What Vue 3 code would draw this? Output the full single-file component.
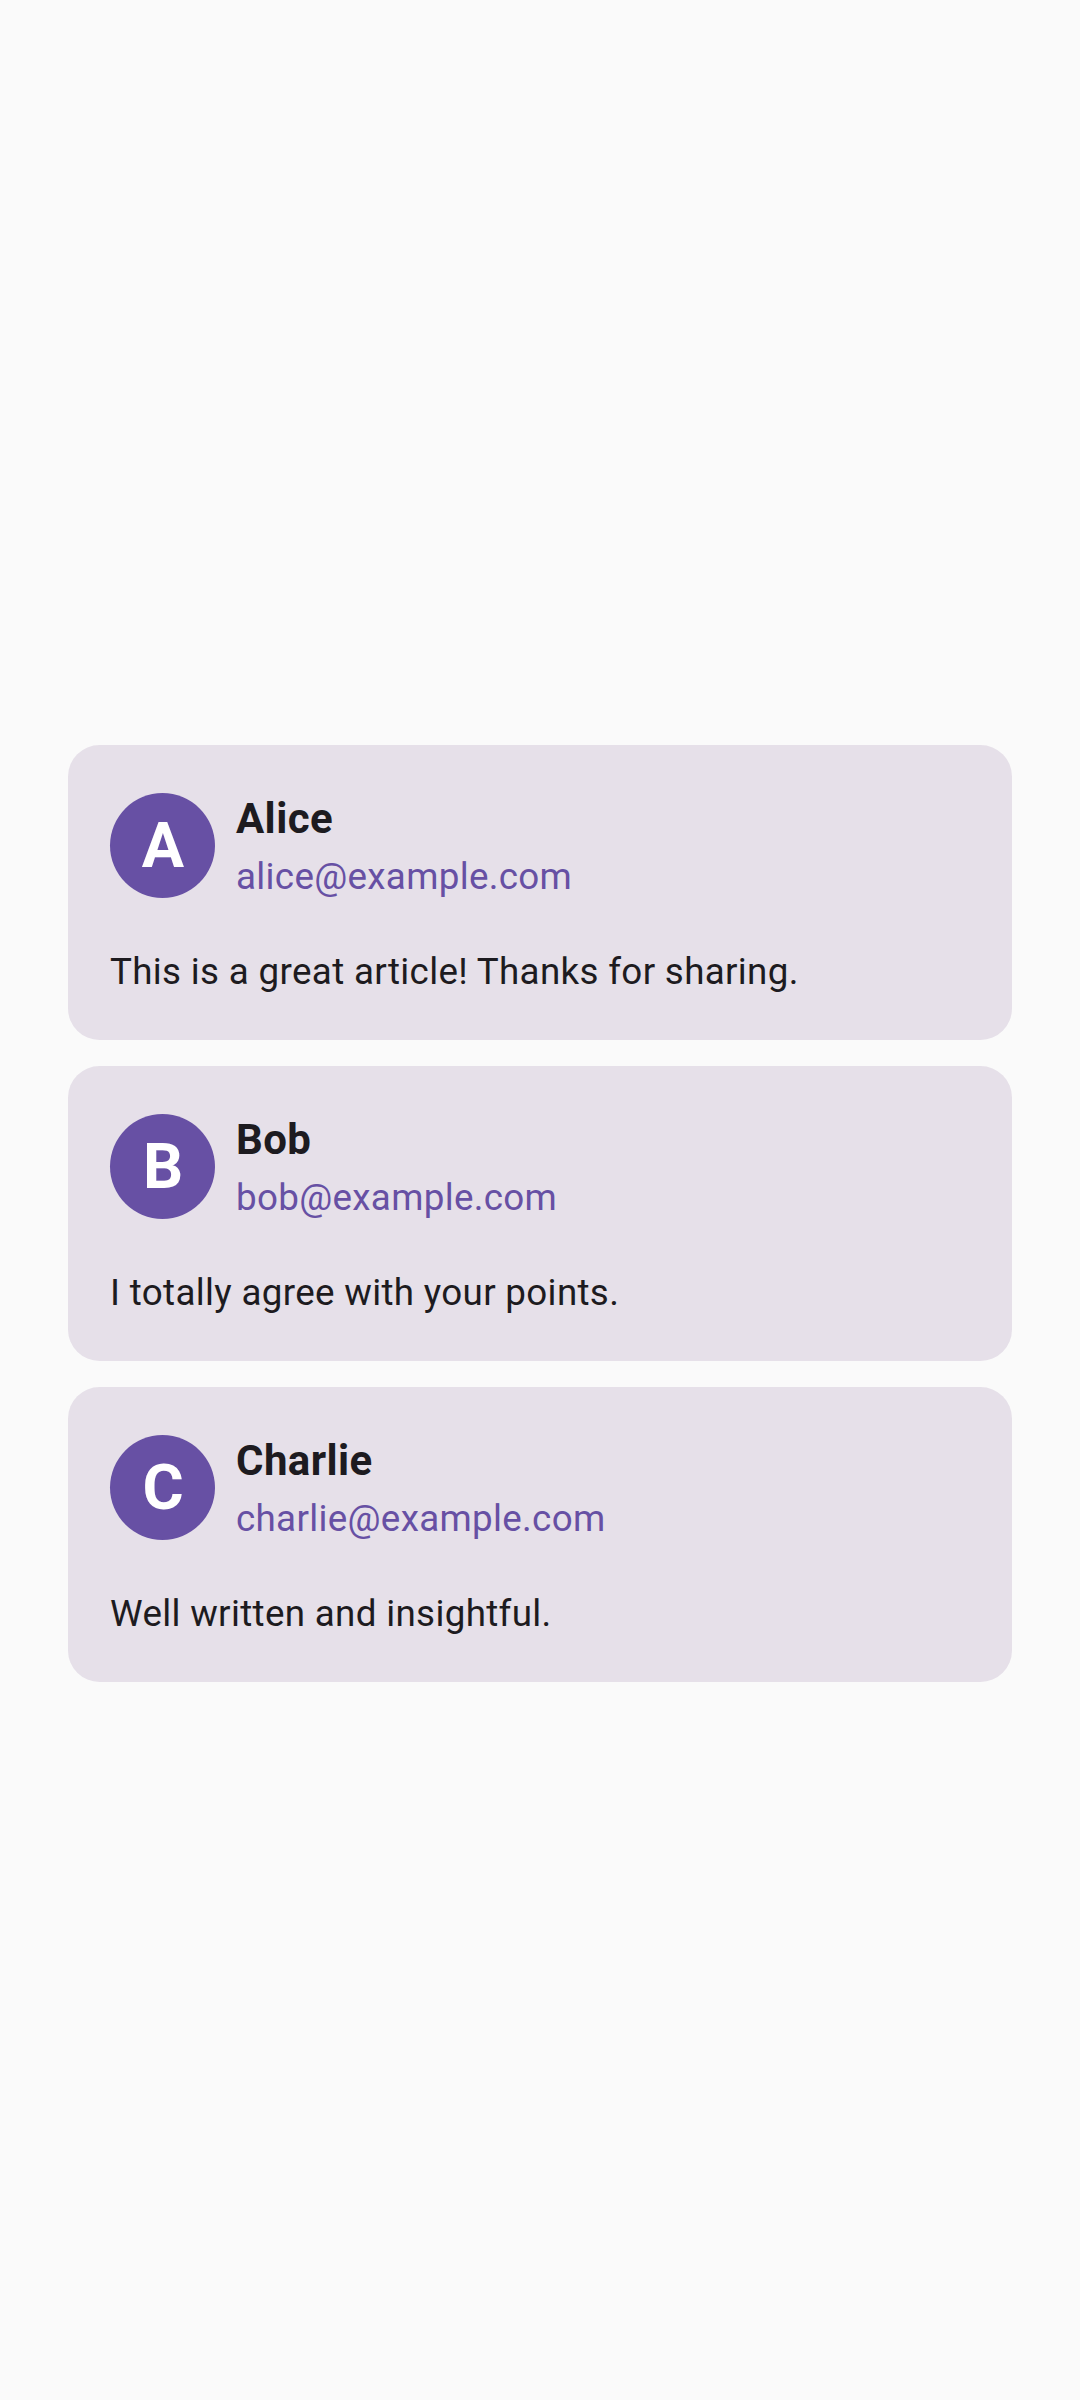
<script setup>
const comments = [
  { name: 'Alice', email: 'alice@example.com', text: 'This is a great article! Thanks for sharing.' },
  { name: 'Bob', email: 'bob@example.com', text: 'I totally agree with your points.' },
  { name: 'Charlie', email: 'charlie@example.com', text: 'Well written and insightful.' },
]
</script>

<template>
  <main class="screen">
    <article v-for="c in comments" :key="c.email" class="card">
      <header class="author">
        <div class="avatar">{{ c.name[0] }}</div>
        <div class="identity">
          <div class="name">{{ c.name }}</div>
          <div class="email">{{ c.email }}</div>
        </div>
      </header>
      <p class="body">{{ c.text }}</p>
    </article>
  </main>
</template>

<style>
body { background: #fafafa; }
</style>

<style scoped>
.screen {
  box-sizing: border-box;
  height: 2400px;
  padding: 745px 68px 0;
  display: flex;
  flex-direction: column;
  gap: 26px;
  background: #fafafa;
  font-family: Roboto, sans-serif;
  color: #1d1b20;
}
.card {
  box-sizing: border-box;
  height: 295px;
  padding: 42px;
  border-radius: 31.5px;
  background: #e6e0e9;
}
.author { display: flex; align-items: center; gap: 21px; height: 116px; }
.avatar {
  box-sizing: border-box;
  width: 105px;
  height: 105px;
  padding-left: 1px;
  border-radius: 50%;
  background: #6750a4;
  color: #fff;
  font-size: 63px;
  font-weight: 700;
  line-height: 105px;
  text-align: center;
}
.name { font-size: 42px; font-weight: 700; line-height: 63px; letter-spacing: 0.4px; }
.email { font-size: 36.75px; line-height: 53px; letter-spacing: 0.32px; color: #6750a4; }
.body { margin: 42px 0 0; font-size: 36.75px; line-height: 53px; letter-spacing: 0.33px; }
</style>
